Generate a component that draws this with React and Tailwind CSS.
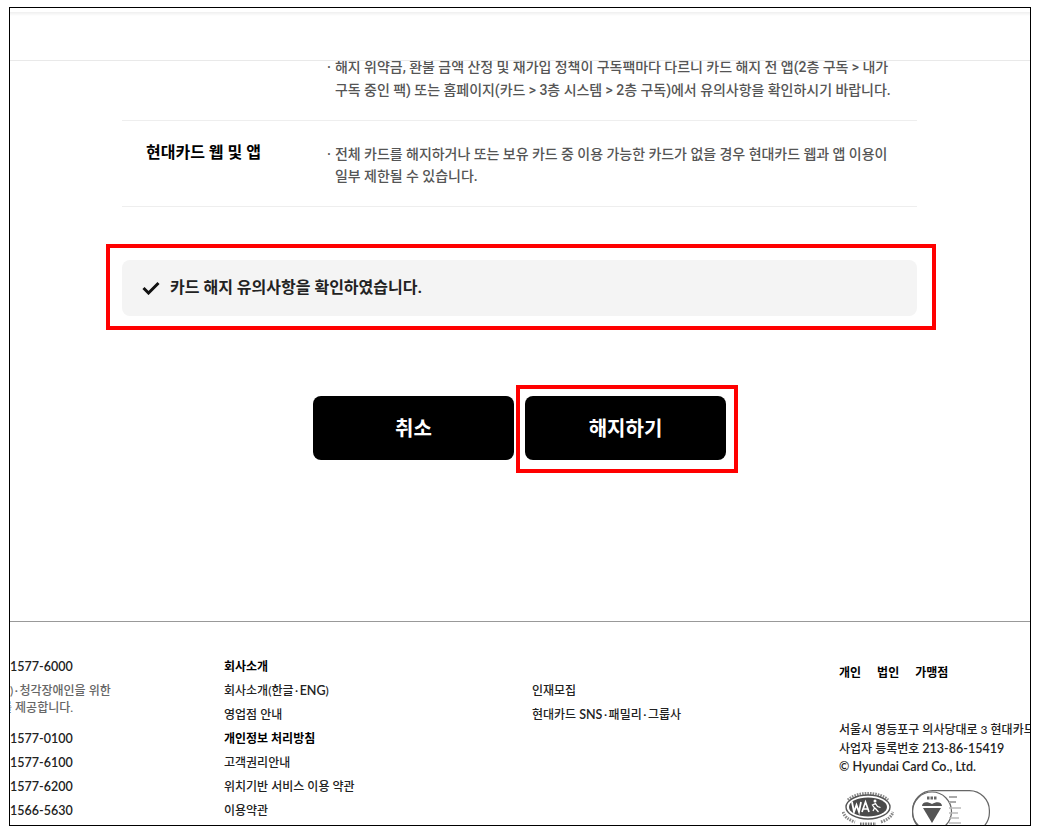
import React from "react";

const KR = "font-['Roboto','Noto_Sans_CJK_KR',sans-serif]";
const FOOT = "font-['Lato','Noto_Sans_CJK_KR',sans-serif]";

const WaMark = () => (
  <svg width="52" height="36" viewBox="0 0 52 36" className="block" fill="none">
    <path d="M6 10a23 13 0 0 1 40 0" stroke="#888" strokeWidth="3" strokeDasharray="1.6 1" />
    <path d="M1 22a25 14 0 0 0 12 10M39 32a25 14 0 0 0 12-10" stroke="#888" strokeWidth="3" strokeDasharray="1.6 1" />
    <path d="M18 34h16" stroke="#777" strokeWidth="3" strokeDasharray="1.6 1" />
    <ellipse cx="26" cy="17" rx="22" ry="12" stroke="#555" strokeWidth="1.4" />
    <ellipse cx="26" cy="17" rx="19" ry="9.5" fill="#4a4a4a" />
    <path d="M10 12l2 10 2.5-7 2.5 7 2-10" stroke="#fff" strokeWidth="1.8" />
    <path d="M20 22l3.5-10 3.5 10M21.5 19h4" stroke="#fff" strokeWidth="1.7" />
    <circle cx="33" cy="11" r="1.5" fill="#fff" />
    <path d="M31 21l1.5-3-2-3 3-1.5 2 3 3 1M33 18l3.5 4" stroke="#fff" strokeWidth="1.3" />
  </svg>
);

const BsiMark = () => (
  <svg width="78" height="44" viewBox="0 0 78 44" className="block" fill="none">
    <rect x="0.6" y="0.6" width="76.8" height="42" rx="20" stroke="#666" strokeWidth="1.2" />
    <circle cx="20" cy="21.5" r="19.5" stroke="#666" strokeWidth="1.2" />
    <path d="M10 16c0-4 5-5 10-2 5-3 10-2 10 2H10z" fill="#555" />
    <path d="M11 18h18l-9 15z" fill="#555" />
    <path d="M15 8h10" stroke="#666" strokeWidth="3" strokeDasharray="2.5 1" />
    <path d="M37 7h8M37 12h7" stroke="#aaa" strokeWidth="1.8" />
    <path d="M37 18h12M37 23h9M37 28h10M37 33h12" stroke="#bbb" strokeWidth="1.3" />
  </svg>
);

const FooterLink = ({ bold, children }) => (
  <div className={`h-[24px] leading-[24px] text-[12px] whitespace-nowrap text-[#222] ${bold ? "font-bold text-black" : "font-medium"}`}>
    {children}
  </div>
);

const Num = ({ children }) => <span className="text-[12.5px] font-semibold">{children}</span>;
const Dot = () => <span className="mx-[1.5px]">·</span>;

export default function App() {
  return (
    <div className="h-[832px] bg-white pt-[7px] pl-[9px] overflow-hidden">
      <div className={`relative w-[1022px] h-[819px] border border-black overflow-hidden bg-white ${KR}`}>
        {/* 상단 헤더 */}
        <div className="relative z-10 h-[53px] bg-white border-b border-[#e9e9e9] pt-[4px]">
          <div className="h-[4px] bg-gradient-to-b from-[#efefef] to-white" />
        </div>

        <div className="mt-[-5px] ml-[112px] w-[795px]">
          <div className="flex h-[65px] border-b border-[#eeeeee]">
            <div className="w-[205px]" />
            <div className="text-[14px] leading-[22.5px] tracking-[-0.04px] font-medium text-[#555] whitespace-nowrap">
              <div className="flex">
                <span className="w-[8px]">·</span>
                <span>해지 위약금, 환불 금액 산정 및 재가입 정책이 구독팩마다 다르니 카드 해지 전 앱(2층 구독 &gt; 내가</span>
              </div>
              <div className="pl-[8px]">구독 중인 팩) 또는 홈페이지(카드 &gt; 3층 시스템 &gt; 2층 구독)에서 유의사항을 확인하시기 바랍니다.</div>
            </div>
          </div>
          <div className="flex h-[86px] border-b border-[#eeeeee] pt-[22px]">
            <div className="w-[205px] pl-[24px] text-[16px] leading-[20px] font-bold text-black whitespace-nowrap">현대카드 웹 및 앱</div>
            <div className="text-[14px] leading-[22px] tracking-[-0.04px] font-medium text-[#555] whitespace-nowrap">
              <div className="flex">
                <span className="w-[8px]">·</span>
                <span>전체 카드를 해지하거나 또는 보유 카드 중 이용 가능한 카드가 없을 경우 현대카드 웹과 앱 이용이</span>
              </div>
              <div className="pl-[8px]">일부 제한될 수 있습니다.</div>
            </div>
          </div>
        </div>

        {/* 유의사항 확인 */}
        <div className="mt-[37px] ml-[96px] w-[830px] h-[86px] border-[4px] border-[#ff0000] pt-[12px] pl-[12px]">
          <div className="flex items-center w-[795px] h-[56px] bg-[#f4f4f4] rounded-[8px] pl-[20px]">
            <svg width="18" height="14" viewBox="0 0 18 14" fill="none">
              <path d="M1.5 7L6.5 12L16.5 2" stroke="#111" strokeWidth="3" />
            </svg>
            <span className="ml-[10px] text-[16px] font-bold text-[#222]">카드 해지 유의사항을 확인하였습니다.</span>
          </div>
        </div>

        {/* 버튼 */}
        <div className="flex mt-[55px] ml-[303px]">
          <button className="mt-[11px] w-[201px] h-[64px] bg-black rounded-[8px] pt-[2px] text-white text-[20px] font-bold">취소</button>
          <div className="ml-[2px] w-[222px] h-[88px] border-[4px] border-[#ff0000] pt-[7px] pl-[5px]">
            <button className="block w-[201px] h-[64px] bg-black rounded-[8px] pt-[2px] text-white text-[20px] font-bold">해지하기</button>
          </div>
        </div>

        {/* 푸터 */}
        <div className={`mt-[148px] border-t border-[#999] pt-[33px] flex ${FOOT}`}>
          <div className="w-[214px] shrink-0">
            <FooterLink><Num>1577-6000</Num></FooterLink>
            <div className="h-[48px] pt-[3px] text-[12px] leading-[17px] font-medium text-[#666] whitespace-nowrap">
              <div>)<Dot />청각장애인을 위한</div>
              <div className="ml-[-9px]">를 제공합니다.</div>
            </div>
            <FooterLink><Num>1577-0100</Num></FooterLink>
            <FooterLink><Num>1577-6100</Num></FooterLink>
            <FooterLink><Num>1577-6200</Num></FooterLink>
            <FooterLink><Num>1566-5630</Num></FooterLink>
          </div>
          <div className="w-[308px] shrink-0">
            <FooterLink bold>회사소개</FooterLink>
            <FooterLink>회사소개(한글<Dot /><Num>ENG</Num>)</FooterLink>
            <FooterLink>영업점 안내</FooterLink>
            <FooterLink bold>개인정보 처리방침</FooterLink>
            <FooterLink>고객권리안내</FooterLink>
            <FooterLink>위치기반 서비스 이용 약관</FooterLink>
            <FooterLink>이용약관</FooterLink>
          </div>
          <div className="w-[307px] shrink-0 pt-[24px]">
            <FooterLink>인재모집</FooterLink>
            <FooterLink>현대카드 <Num>SNS</Num><Dot />패밀리<Dot />그룹사</FooterLink>
          </div>
          <div className="shrink-0 pt-[6px]">
            <div className="flex gap-[16px] text-[12px] leading-[24px] font-bold text-black">
              <span>개인</span>
              <span>법인</span>
              <span>가맹점</span>
            </div>
            <div className="mt-[36px] text-[12px] leading-[18.5px] font-medium text-[#222] whitespace-nowrap">
              <div>서울시 영등포구 의사당대로 3 현대카드</div>
              <div>사업자 등록번호 <Num>213-86-15419</Num></div>
              <div><Num>© Hyundai Card Co., Ltd.</Num></div>
            </div>
            <div className="flex items-start gap-[18px] mt-[13px] ml-[3px]">
              <WaMark />
              <BsiMark />
            </div>
          </div>
        </div>
      </div>
    </div>
  );
}
